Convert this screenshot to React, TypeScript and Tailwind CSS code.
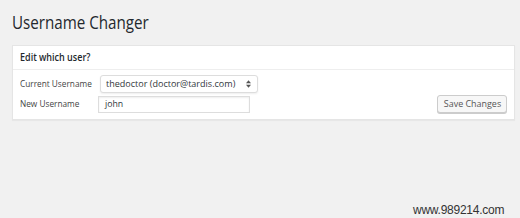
export default function App() {
  return (
    <div className="relative h-[218px] w-[520px] bg-[#f1f1f1] font-['Open_Sans',sans-serif] text-[#444]">
      <div className="px-[12px] pt-[11px]">
        <h1 className="h-[22px] text-[18.5px] leading-[22px] text-[#23282d]">
          <span className="inline-block origin-left whitespace-nowrap [transform:scaleX(0.82)]">Username Changer</span>
        </h1>

        <div className="mt-[12px] w-[503px] border border-[#e5e5e5] bg-white shadow-[0_1px_1px_rgba(0,0,0,0.04)]">
          <div className="h-[24px] border-b border-[#eee] px-[7px] pt-[5px] text-[10px] font-semibold leading-[13px] text-[#23282d]">
            <span className="inline-block origin-left whitespace-nowrap [transform:scaleX(0.9)]">Edit which user?</span>
          </div>

          <div className="flex items-end justify-between px-[7px] pb-[6px] pt-[5px]">
            <div className="flex flex-col gap-[3px]">
              <div className="flex items-center">
                <span className="w-[80px] text-[9.5px] text-[#444]">
                  <span className="inline-block origin-left whitespace-nowrap [transform:scaleX(0.87)]">Current Username</span>
                </span>
                <div className="flex h-[18px] w-[158px] items-center justify-between rounded-[3px] border border-[#ddd] bg-white pl-[5px] pr-[6px] text-[9.5px] shadow-[0_1px_2px_rgba(0,0,0,0.07)]">
                  <span className="inline-block origin-left whitespace-nowrap text-[#32373c] [transform:scaleX(0.95)]">thedoctor (doctor@tardis.com)</span>
                  <svg width="5" height="8" viewBox="0 0 6 9">
                    <path d="M3 0 L6 3.5 L0 3.5 Z" fill="#555" />
                    <path d="M3 9 L6 5.5 L0 5.5 Z" fill="#555" />
                  </svg>
                </div>
              </div>
              <div className="flex items-center">
                <span className="w-[78px] text-[9.5px] text-[#444]">
                  <span className="inline-block origin-left whitespace-nowrap [transform:scaleX(0.87)]">New Username</span>
                </span>
                <div className="flex h-[17px] w-[152px] items-center border border-[#ddd] bg-white px-[6px] text-[9.5px] shadow-[inset_0_1px_2px_rgba(0,0,0,0.07)]">
                  <span className="inline-block origin-left whitespace-nowrap text-[#32373c] [transform:scaleX(0.92)]">john</span>
                </div>
              </div>
            </div>

            <button className="flex h-[18px] w-[70px] items-center justify-center rounded-[3px] border border-[#ccc] bg-[#f7f7f7] text-[9.5px] leading-none text-[#555] shadow-[0_1px_0_#ccc]">
              <span className="inline-block whitespace-nowrap [transform:scaleX(0.94)]">Save Changes</span>
            </button>
          </div>
        </div>
      </div>

      <div className="absolute left-[413px] top-[203px] font-['Liberation_Sans',sans-serif] text-[12px] leading-[14px] tracking-[-0.25px] text-[#333]">
        www.989214.com
      </div>
    </div>
  )
}
